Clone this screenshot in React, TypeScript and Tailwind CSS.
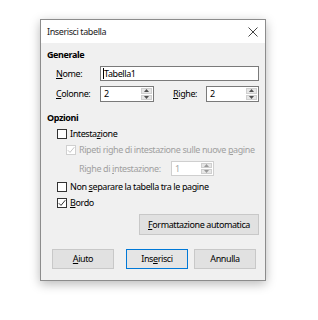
import type { ReactNode } from "react";

function U({ children }: { children: ReactNode }) {
  return <span className="underline underline-offset-[1px]">{children}</span>;
}

function Spin({ value, width, disabled }: { value: string; width: string; disabled?: boolean }) {
  const border = disabled ? "border-[#cfcfcf]" : "border-[#7a7a7a]";
  const arrow = disabled ? "#9a9a9a" : "#505050";
  return (
    <div className={`flex h-full ${width} border ${border} bg-white`}>
      <div className={`flex-1 flex items-center pl-[3px] ${disabled ? "text-[#a8a8a8]" : "text-black"}`}>{value}</div>
      <div className="w-[11px] my-[1px] mr-[1px] flex flex-col gap-[1px]">
        <div className="flex-1 bg-[#e6e6e6] border border-[#cfcfcf] flex items-center justify-center">
          <svg width="5" height="3" viewBox="0 0 5 3">
            <path d="M0 3 L2.5 0 L5 3 Z" fill={arrow} />
          </svg>
        </div>
        <div className="flex-1 bg-[#e6e6e6] border border-[#cfcfcf] flex items-center justify-center">
          <svg width="5" height="3" viewBox="0 0 5 3">
            <path d="M0 0 L2.5 3 L5 0 Z" fill={arrow} />
          </svg>
        </div>
      </div>
    </div>
  );
}

function Check({ checked, disabled }: { checked?: boolean; disabled?: boolean }) {
  const col = disabled ? "#c4c4c4" : "#333333";
  return (
    <div className={`w-[10px] h-[10px] shrink-0 border ${disabled ? "border-[#d0d0d0]" : "border-[#333333]"} bg-white flex items-center justify-center`}>
      {checked && (
        <svg width="8" height="8" viewBox="0 0 8 8">
          <path d="M0.8 4.2 L3 6.4 L7.3 1.2" stroke={col} strokeWidth="1" fill="none" />
        </svg>
      )}
    </div>
  );
}

export default function App() {
  return (
    <div className="w-[318px] h-[320px] bg-white pl-[40px] pt-[19px] font-['Noto_Sans',sans-serif] text-[9px] tracking-[-0.4px] leading-[12px] text-black whitespace-nowrap">
      <div className="w-[226px] h-[262px] border border-[#8c8c8c] shadow-[0_3px_10px_rgba(0,0,0,0.28)] flex flex-col">
        <div className="h-[23px] bg-white flex items-center justify-between pl-[6px] pr-[7px] shrink-0">
          <span className="text-[#222]">Inserisci tabella</span>
          <svg width="10" height="10" viewBox="0 0 10 10">
            <path d="M0.5 0.5 L9.5 9.5 M9.5 0.5 L0.5 9.5" stroke="#444" strokeWidth="1" />
          </svg>
        </div>
        <div className="flex-1 bg-[#f0f0f0] pl-[6px] pr-[6px] flex flex-col">
          <div className="mt-[6px] h-[12px] font-bold">Generale</div>

          <div className="mt-[5px] h-[15px] flex items-center pl-[9px]">
            <span className="w-[44px]"><U>N</U>ome:</span>
            <div className="flex-1 h-full border border-[#7a7a7a] bg-white flex items-center pl-[2px]">
              <span className="w-px h-[11px] bg-black" />
              <span>Tabella1</span>
            </div>
          </div>

          <div className="mt-[5px] h-[16px] flex items-center pl-[9px]">
            <span className="w-[44px]"><U>C</U>olonne:</span>
            <Spin value="2" width="w-[54px]" />
            <span className="ml-[19px] w-[33px]"><U>R</U>ighe:</span>
            <Spin value="2" width="w-[53px]" />
          </div>

          <div className="mt-[10px] h-[12px] font-bold">Opzioni</div>

          <div className="mt-[4px] h-[12px] flex items-center pl-[10px] gap-[3px]">
            <Check />
            <span>Intesta<U>z</U>ione</span>
          </div>

          <div className="mt-[4px] h-[12px] flex items-center pl-[19px] gap-[3px] text-[#a0a0a0]">
            <Check checked disabled />
            <span>Ripeti righe di intestazione sulle nuove <U>p</U>agine</span>
          </div>

          <div className="mt-[5px] h-[15px] flex items-center pl-[32px] text-[#a0a0a0]">
            <span className="w-[92px]">Righe di <U>i</U>ntestazione:</span>
            <Spin value="1" width="w-[43px]" disabled />
          </div>

          <div className="mt-[5px] h-[12px] flex items-center pl-[10px] gap-[3px]">
            <Check />
            <span>Non <U>s</U>eparare la tabella tra le pagine</span>
          </div>

          <div className="mt-[4px] h-[12px] flex items-center pl-[10px] gap-[3px]">
            <Check checked />
            <span><U>B</U>ordo</span>
          </div>

          <div className="mt-[5px] flex justify-end">
            <div className="w-[120px] h-[21px] bg-[#e1e1e1] border border-[#c8c8c8] flex items-center justify-center">
              <span><U>F</U>ormattazione automatica</span>
            </div>
          </div>

          <div className="mt-[14px] h-[20px] flex pl-[5px]">
            <div className="w-[62px] h-full bg-[#e1e1e1] border border-[#c8c8c8] flex items-center justify-center">
              <span><U>A</U>iuto</span>
            </div>
            <div className="ml-[12px] w-[62px] h-full bg-[#e5e5e5] border border-[#0078d7] flex items-center justify-center">
              <span>Ins<U>e</U>risci</span>
            </div>
            <div className="ml-[6px] w-[62px] h-full bg-[#e1e1e1] border border-[#c8c8c8] flex items-center justify-center">
              <span>Annulla</span>
            </div>
          </div>
        </div>
      </div>
    </div>
  );
}
